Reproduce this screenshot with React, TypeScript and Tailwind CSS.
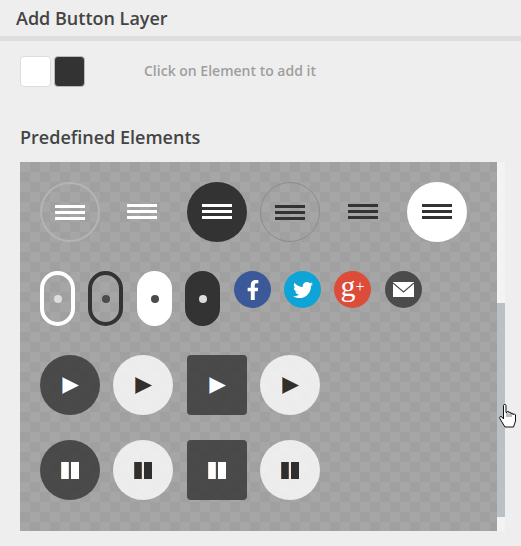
import { FaFacebookF, FaTwitter } from "react-icons/fa";

function Menu({ color, className = "" }: { color: string; className?: string }) {
  return (
    <div className={`flex w-[30px] flex-col gap-[3px] ${className}`}>
      <div className={`h-[3px] ${color}`} />
      <div className={`h-[3px] ${color}`} />
      <div className={`h-[3px] ${color}`} />
    </div>
  );
}

function Play({ fill, edge }: { fill: string; edge: string }) {
  return (
    <svg width="17" height="17" viewBox="0 0 17 17" className="ml-[1px]">
      <polygon points="0,0 17,8.5 0,17" fill={fill} />
      <rect x="0" y="0" width="0.8" height="17" fill={edge} />
    </svg>
  );
}

function Pause({ fill, edge }: { fill: string; edge: string }) {
  return (
    <svg width="18" height="17" viewBox="0 0 18 17">
      <rect x="0" y="0" width="8" height="17" fill={fill} />
      <rect x="10" y="0" width="8" height="17" fill={fill} />
      <rect x="0" y="0" width="0.6" height="17" fill={edge} />
      <rect x="7.4" y="0" width="0.6" height="17" fill={edge} />
    </svg>
  );
}

function Pill({ className, dot }: { className: string; dot: string }) {
  return (
    <div className={`flex h-[55px] w-[35px] items-center justify-center rounded-full ${className}`}>
      <div className={`h-2 w-2 rounded-full ${dot}`} />
    </div>
  );
}

const tile = "flex h-[60px] w-[60px] items-center justify-center";
const darkBg = "bg-[rgba(51,51,51,0.8)]";
const lightBg = "bg-[rgba(255,255,255,0.8)]";

export default function App() {
  return (
    <div className="relative h-[546px] w-[521px] overflow-hidden bg-[#eeeeee] font-['Open_Sans',sans-serif]">
      <div className="h-[41px] border-b-[5px] border-[#dddddd] pl-4 pt-[6px]">
        <h2 className="text-[18px] leading-[24px] font-semibold text-[#444444]">Add Button Layer</h2>
      </div>

      <div className="flex pl-[20px] pt-[15px]">
        <div className="h-[31px] w-[31px] rounded-[4px] border border-[#dddddd] bg-white" />
        <div className="ml-[3px] h-[31px] w-[31px] rounded-[4px] border border-[#bbbbbb] bg-[#333333]" />
        <p className="ml-[59px] pt-[6px] text-[14px] leading-[18px] font-semibold text-[#9e9e9e]">
          Click on Element to add it
        </p>
      </div>

      <h3 className="pl-[20px] pt-[38px] text-[18px] leading-[25px] font-semibold text-[#444444]">
        Predefined Elements
      </h3>

      <div className="mt-[12px] flex pl-[20px]">
        <div className="h-[369px] w-[477px] bg-[#a6a6a6] bg-[conic-gradient(#a0a0a0_25%,transparent_0_50%,#a0a0a0_0_75%,transparent_0)] bg-[length:20px_20px] pl-[20px] pt-[20px]">
          <div className="flex h-[60px] items-start">
            <div className={`${tile} rounded-full border-2 border-[#b4b4b4] pt-[1px]`}>
              <Menu color="bg-white" />
            </div>
            <Menu color="bg-white" className="ml-[27px] mt-[22px]" />
            <div className={`${tile} ml-[30px] rounded-full bg-[#333333] pb-[2px]`}>
              <Menu color="bg-white" />
            </div>
            <div className={`${tile} ml-[13px] rounded-full border border-[#8c8c8c]`}>
              <Menu color="bg-[#333333]" />
            </div>
            <Menu color="bg-[#333333]" className="ml-[28px] mt-[22px]" />
            <div className={`${tile} ml-[29px] rounded-full bg-white pb-[1px]`}>
              <Menu color="bg-[#333333]" />
            </div>
          </div>

          <div className="mt-[29px] flex h-[55px] items-start">
            <Pill className="border-4 border-white" dot="bg-[#dddddd]" />
            <Pill className="ml-[13px] border-4 border-[#333333]" dot="bg-[#4b4b4b]" />
            <Pill className="ml-[14px] bg-white" dot="bg-[#4b4b4b]" />
            <Pill className="ml-[13px] bg-[#333333]" dot="bg-[#dddddd]" />
            <div className="ml-[14px] flex h-[37px] w-[37px] items-center justify-center rounded-full bg-[#3b5998] text-white">
              <FaFacebookF size={20} />
            </div>
            <div className="ml-[13px] flex h-[37px] w-[37px] items-center justify-center rounded-full bg-[#0ea5d6] text-white">
              <FaTwitter size={20} />
            </div>
            <div className="ml-[13px] flex h-[37px] w-[37px] items-start justify-center rounded-full bg-[#dd4b39] font-['Liberation_Serif',serif] text-white">
              <span className="text-[30px] leading-[30px]">g</span>
              <span className="text-[16px] leading-[32px]">+</span>
            </div>
            <div className="ml-[14px] flex h-[37px] w-[37px] items-center justify-center rounded-full bg-[#4b4b4b]">
              <svg width="21" height="15" viewBox="0 0 21 15">
                <rect width="21" height="15" fill="#ffffff" />
                <path d="M0 1 L10.5 10 L21 1" fill="none" stroke="#4b4b4b" strokeWidth="1.2" />
              </svg>
            </div>
          </div>

          <div className="mt-[29px] flex h-[60px]">
            <div className={`${tile} rounded-full ${darkBg}`}>
              <Play fill="#ffffff" edge="#6aa5e0" />
            </div>
            <div className={`${tile} ml-[13px] rounded-full ${lightBg}`}>
              <Play fill="#2f2f2f" edge="#b5793a" />
            </div>
            <div className={`${tile} ml-[14px] rounded-[4px] ${darkBg}`}>
              <Play fill="#ffffff" edge="#6aa5e0" />
            </div>
            <div className={`${tile} ml-[13px] rounded-full ${lightBg}`}>
              <Play fill="#2f2f2f" edge="#b5793a" />
            </div>
          </div>

          <div className="mt-[25px] flex h-[60px]">
            <div className={`${tile} rounded-full ${darkBg}`}>
              <Pause fill="#ffffff" edge="#d9c7a8" />
            </div>
            <div className={`${tile} ml-[13px] rounded-full ${lightBg}`}>
              <Pause fill="#2f2f2f" edge="#8a6a45" />
            </div>
            <div className={`${tile} ml-[14px] rounded-[4px] ${darkBg}`}>
              <Pause fill="#ffffff" edge="#d9c7a8" />
            </div>
            <div className={`${tile} ml-[13px] rounded-full ${lightBg}`}>
              <Pause fill="#2f2f2f" edge="#8a6a45" />
            </div>
          </div>
        </div>

        <div className="h-[369px] w-2 bg-[#f3f3f3] pt-[141px]">
          <div className="h-[214px] bg-[#b9c0c6]" />
        </div>
      </div>

      {/* mouse cursor sits over the scrollbar */}
      <svg
        width="18"
        height="24"
        viewBox="0 0 18 24"
        className="absolute left-[499px] top-[404px]"
      >
        <path
          d="M4.5 1.5 C4.5 0 7 0 7 1.5 V8.5 H8 V8.2 C8 7 10 7 10 8.2 V9 C10 8 12 8 12 9 V10 C12 9 14 9 14 10 V10.8 C14 9.8 16.5 9.8 16.5 11 V17 L14.5 23 H6 L0.8 14.5 C0 12.8 1.8 11.8 3 13 L4.5 15 Z"
          fill="#ffffff"
          stroke="#111111"
          strokeWidth="1"
        />
        <path d="M8 9 V13 M10 9.5 V13 M12 10 V13" stroke="#555555" strokeWidth="0.8" fill="none" />
      </svg>
    </div>
  );
}
